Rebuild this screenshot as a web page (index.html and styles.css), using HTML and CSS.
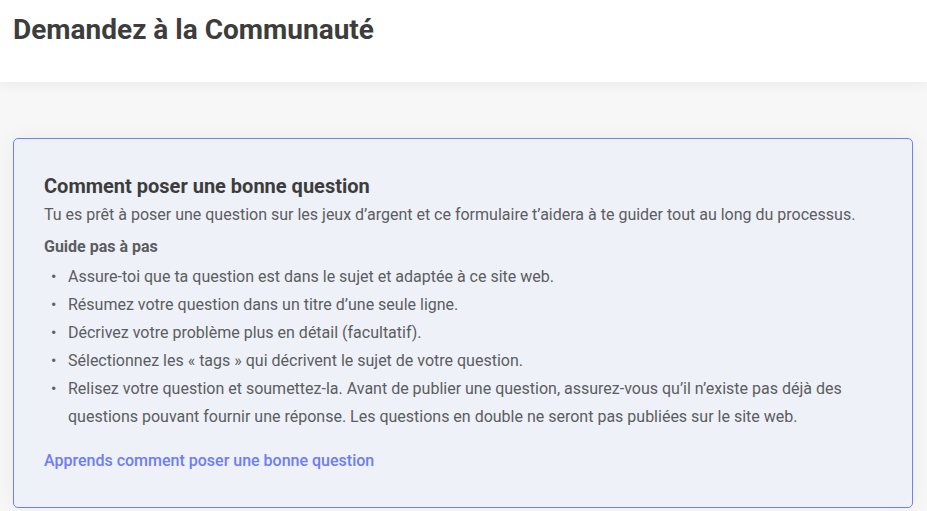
FILE: index.html
```html
<!DOCTYPE html>
<html lang="fr">
<head>
<meta charset="utf-8">
<title>Demandez à la Communauté</title>
<link rel="stylesheet" href="styles.css">
</head>
<body>
<header class="page-header">
  <h1 class="page-title">Demandez à la Communauté</h1>
</header>
<main class="page-main">
  <section class="guide-card">
    <h2 class="guide-title">Comment poser une bonne question</h2>
    <p class="guide-intro">Tu es prêt à poser une question sur les jeux d’argent et ce formulaire t’aidera à te guider tout au long du processus.</p>
    <h3 class="guide-subtitle">Guide pas à pas</h3>
    <ul class="guide-list">
      <li>Assure-toi que ta question est dans le sujet et adaptée à ce site web.</li>
      <li>Résumez votre question dans un titre d’une seule ligne.</li>
      <li>Décrivez votre problème plus en détail (facultatif).</li>
      <li>Sélectionnez les « tags » qui décrivent le sujet de votre question.</li>
      <li>Relisez votre question et soumettez-la. Avant de publier une question, assurez-vous qu’il n’existe pas déjà des questions pouvant fournir une réponse. Les questions en double ne seront pas publiées sur le site web.</li>
    </ul>
    <a class="guide-link" href="#">Apprends comment poser une bonne question</a>
  </section>
</main>
</body>
</html>
```

FILE: styles.css
```css
*, *::before, *::after { box-sizing: border-box; }
html, body {
  margin: 0;
  padding: 0;
  height: 100%;
}
body {
  font-family: Roboto, "Liberation Sans", sans-serif;
  background: #f6f7f6;
  color: #5b5d61;
}
.page-header {
  position: relative;
  z-index: 1;
  background: #ffffff;
  height: 82px;
  padding: 13px 13px 0;
  box-shadow: 0 2px 14px rgba(0, 0, 0, 0.06);
}
.page-title {
  margin: 0;
  font-size: 28px;
  line-height: 34px;
  font-weight: 700;
  color: #3d3d3d;
}
.page-main {
  padding: 56px 14px 20px 13px;
}
.guide-card {
  background: #eef1f8;
  border: 1px solid #7081f7;
  border-radius: 5px;
  padding: 34px 30px 34px;
  box-shadow: 0 0 24px rgba(0, 0, 0, 0.05);
}
.guide-title {
  margin: 0;
  font-size: 20px;
  line-height: 26px;
  font-weight: 700;
  color: #3d3d3d;
}
.guide-intro {
  margin: 4px 0 0;
  font-size: 16px;
  line-height: 24px;
}
.guide-subtitle {
  margin: 8px 0 0;
  font-size: 16px;
  line-height: 24px;
  font-weight: 700;
  color: #5b5d61;
}
.guide-list {
  margin: 4px 0 0;
  padding-left: 24px;
  list-style: none;
  font-size: 16px;
  line-height: 28px;
}
.guide-list li::before {
  content: "\2022";
  display: inline-block;
  width: 24px;
  margin-left: -24px;
  padding-left: 7px;
}
.guide-link {
  display: inline-block;
  margin-top: 18px;
  font-size: 16px;
  line-height: 24px;
  font-weight: 500;
  color: #6c7df6;
  text-decoration: none;
}
```
